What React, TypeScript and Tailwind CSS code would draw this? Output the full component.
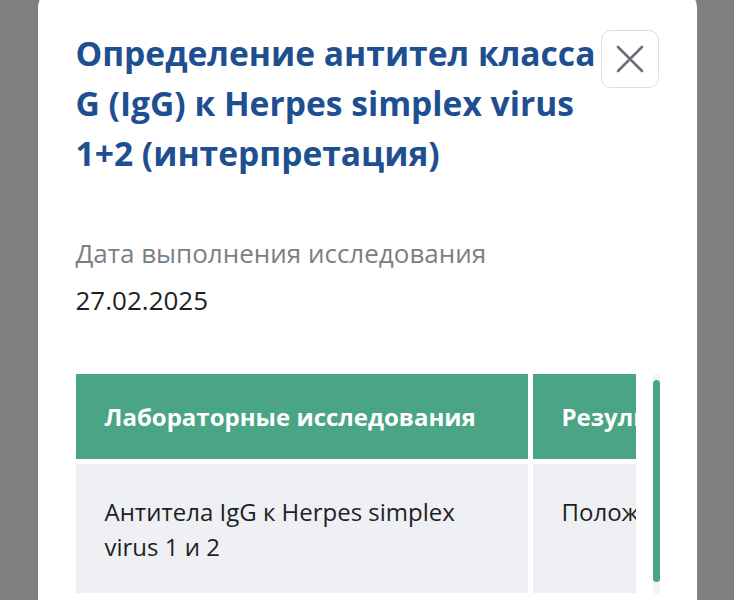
const font = { fontFamily: '"Open Sans", "Noto Sans", sans-serif' };

function CloseIcon() {
  return (
    <svg width="28" height="28" viewBox="0 0 28 28" fill="none" stroke="currentColor" strokeWidth="2.6" strokeLinecap="round">
      <path d="M2 2L26 26M26 2L2 26" />
    </svg>
  );
}

function ResultModal() {
  return (
    <div className="w-[659px] shrink-0 -mt-3 h-[620px] bg-white rounded-t-[20px] pl-[38px] pr-[38px] pt-[40px]">
      <div className="flex items-start justify-between">
        <h2 className="w-[525px] text-[33.6px] leading-[50px] font-bold text-[#1d4f91]">
          Определение антител класса G (IgG) к Herpes simplex virus 1+2 (интерпретация)
        </h2>
        <button className="mt-[2px] w-[58px] h-[58px] flex items-center justify-center rounded-[10px] border border-[#dedede] text-[#6b6f76]">
          <CloseIcon />
        </button>
      </div>

      <div className="mt-[57px] text-[26px] leading-[36px] text-[#7a7f87]">
        Дата выполнения исследования
      </div>
      <div className="mt-[11px] text-[26px] leading-[36px] text-[#1f1f1f]">27.02.2025</div>

      <div className="mt-[56px] flex items-start">
        <div className="w-[560px] overflow-hidden shrink-0">
          <div className="grid grid-cols-[452px_300px] gap-[5px]">
            <div className="h-[85px] bg-[#4aa584] flex items-center pl-[29px] text-white font-bold text-[24px]">
              Лабораторные исследования
            </div>
            <div className="h-[85px] bg-[#4aa584] flex items-center pl-[29px] text-white font-bold text-[24px]">
              Результат
            </div>
            <div className="h-[129px] bg-[#eff0f4] pl-[29px] pr-[20px] pt-[30px] text-[24px] leading-[35px] text-[#1f1f1f]">
              Антитела IgG к Herpes simplex virus 1 и 2
            </div>
            <div className="h-[129px] bg-[#eff0f4] pl-[29px] pt-[30px] text-[24px] leading-[35px] text-[#1f1f1f]">
              Положительный
            </div>
          </div>
        </div>
        <div className="ml-[17px] w-[11px] h-[220px] rounded-full bg-[#f3f4f6] flex justify-center pt-[6px]">
          <div className="w-[7px] h-[202px] rounded-full bg-[#4aa584]" />
        </div>
      </div>
    </div>
  );
}

export default function App() {
  return (
    <div className="h-[600px] overflow-hidden bg-[#808080] flex justify-center" style={font}>
      <ResultModal />
    </div>
  );
}
